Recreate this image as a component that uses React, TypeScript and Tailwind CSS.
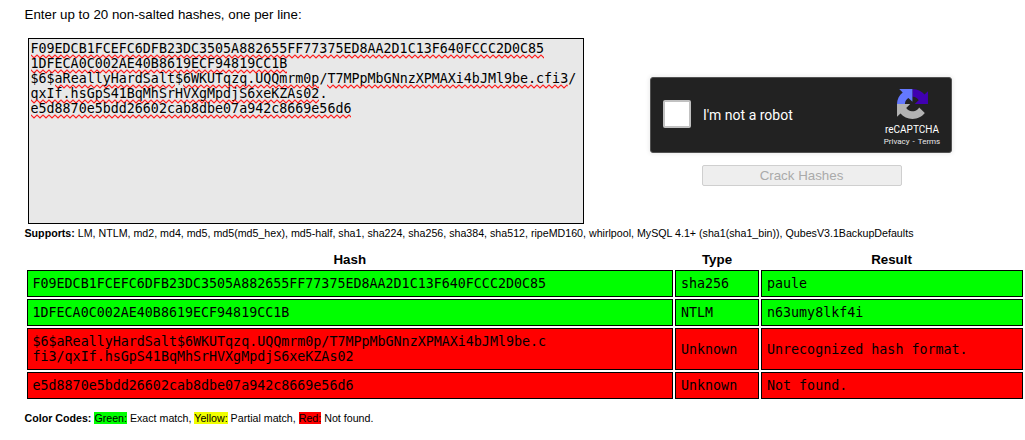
const inputLines: { text: string; bad: boolean }[][] = [
  [{ text: "F09EDCB1FCEFC6DFB23DC3505A882655FF77375ED8AA2D1C13F640FCCC2D0C85", bad: true }],
  [{ text: "1DFECA0C002AE40B8619ECF94819CC1B", bad: true }],
  [
    { text: "$6$", bad: false },
    { text: "aReallyHardSalt", bad: true },
    { text: "$", bad: false },
    { text: "6WKUTqzq.UQQmrm0p", bad: true },
    { text: "/", bad: false },
    { text: "T7MPpMbGNnzXPMAXi4bJMl9be.cfi3", bad: true },
    { text: "/", bad: false },
  ],
  [
    { text: "qxIf.hsGpS41BqMhSrHVXgMpdjS6xeKZAs02", bad: true },
    { text: ".", bad: false },
  ],
  [{ text: "e5d8870e5bdd26602cab8dbe07a942c8669e56d6", bad: true }],
];

const rows = [
  { hash: ["F09EDCB1FCEFC6DFB23DC3505A882655FF77375ED8AA2D1C13F640FCCC2D0C85"], type: "sha256", result: "paule", found: true },
  { hash: ["1DFECA0C002AE40B8619ECF94819CC1B"], type: "NTLM", result: "n63umy8lkf4i", found: true },
  {
    hash: ["$6$aReallyHardSalt$6WKUTqzq.UQQmrm0p/T7MPpMbGNnzXPMAXi4bJMl9be.c", "fi3/qxIf.hsGpS41BqMhSrHVXgMpdjS6xeKZAs02"],
    type: "Unknown",
    result: "Unrecognized hash format.",
    found: false,
  },
  { hash: ["e5d8870e5bdd26602cab8dbe07a942c8669e56d6"], type: "Unknown", result: "Not found.", found: false },
];

function Squiggle({ id }: { id: string }) {
  return (
    <svg className="absolute left-0 top-[13px] h-[5px] w-full" aria-hidden="true">
      <defs>
        <pattern id={id} width="6" height="5" patternUnits="userSpaceOnUse">
          <path d="M-1 2L0 1L3 4L6 1L7 2" fill="none" stroke="#ff1a1a" strokeWidth="1.1" />
        </pattern>
      </defs>
      <rect width="100%" height="5" fill={`url(#${id})`} />
    </svg>
  );
}

function RecaptchaLogo() {
  return (
    <svg className="h-[30px] w-[31px]" viewBox="0 0 64 64" preserveAspectRatio="none" aria-hidden="true">
      <path fill="#4000b0" d="M64 31.955l-.033-1.37V4.687l-7.16 7.16C50.948 4.674 42.033.093 32.05.093L31.86 16.45c.485 0 .86.057 1.135.163 4.976.393 9.288 3.14 11.828 7.124l-8.307 8.307L64 31.953" />
      <path fill="#6478ff" d="M31.862.094l-1.37.033H4.594l7.16 7.16C4.58 13.147 0 22.06 0 32.046H16.26c0-.485.057-.86.163-1.135.393-4.976 3.14-9.288 7.124-11.828l8.307 8.307L31.86.095" />
      <path fill="#b3b3b3" d="M.001 32.045l.033 1.37v25.898l7.16-7.16c5.86 7.173 14.774 11.754 24.76 11.754 10.4 0 19.622-4.96 25.458-12.64l-11.736-11.86a15.55 15.55 0 0 1-4.754 5.334c-2.05 1.6-4.952 2.906-8.968 2.906-.485 0-.86-.057-1.135-.163-4.976-.393-9.288-3.14-11.828-7.124l8.307-8.307L0 32.045" />
    </svg>
  );
}

export default function App() {
  return (
    <div className="h-[440px] w-[1025px] overflow-hidden bg-white font-['Liberation_Sans',sans-serif] text-[13.333px] leading-[15px] text-black">
      <p className="pl-[24.5px] pt-[7px]">Enter up to 20 non-salted hashes, one per line:</p>

      <div className="mt-[16px] flex pl-[28px]">
        <div className="h-[186px] w-[556px] shrink-0 border border-black bg-[#e8e8e8] px-[1.5px] pt-[2px] font-['DejaVu_Sans_Mono',monospace]">
          {inputLines.map((line, i) => (
            <div key={i} className="flex h-[15px] whitespace-pre">
              {line.map((part, j) => (
                <span key={j} className="relative">
                  {part.text}
                  {part.bad && <Squiggle id={`wave-${i}-${j}`} />}
                </span>
              ))}
            </div>
          ))}
        </div>

        <div className="ml-[66px] flex w-[302px] flex-col items-center pt-[39px]">
          <div className="flex h-[76px] w-[302px] items-start rounded-[3px] border border-[#525252] bg-[#222222] shadow-[0_0_4px_1px_rgba(0,0,0,0.08)]">
            <div className="ml-[12px] mt-[22px] size-[28px] rounded-[2px] border-2 border-[#c1c1c1] bg-white" />
            <span className="ml-[12px] mt-[29px] font-[Roboto,sans-serif] text-[14px] leading-[17px] text-white">I'm not a robot</span>
            <div className="ml-auto mr-[10px] mt-[11px] flex w-[58px] flex-col items-center whitespace-nowrap text-white">
              <RecaptchaLogo />
              <span className="mt-[5px] font-[Roboto,sans-serif] text-[10px] leading-[12px]">reCAPTCHA</span>
              <span className="mt-[1px] font-[Roboto,sans-serif] text-[8px] leading-[10px] text-[#e8e8e8]">
                Privacy<span className="px-[1px]"> - </span>Terms
              </span>
            </div>
          </div>
          <button className="ml-[2px] mt-[12px] h-[21px] w-[200px] rounded-[2px] border border-[#cfcfcf] bg-[#eeeeee] pr-[1px] leading-[19px] text-[#aaaaaa]" disabled>
            Crack Hashes
          </button>
        </div>
      </div>

      <p className="mt-[3px] whitespace-nowrap pl-[24.5px] text-[10.667px] leading-[13px]">
        <b>Supports:</b> LM, NTLM, md2, md4, md5, md5(md5_hex), md5-half, sha1, sha224, sha256, sha384, sha512, ripeMD160, whirlpool, MySQL 4.1+ (sha1(sha1_bin)), QubesV3.1BackupDefaults
      </p>

      <div className="ml-[27px] mt-[12px] flex w-[996px] flex-col gap-[2px]">
        <div className="grid h-[16px] grid-cols-[646px_84px_261px] gap-[2px] text-center font-bold">
          <span className="pr-[0.5px]">Hash</span>
          <span>Type</span>
          <span>Result</span>
        </div>
        {rows.map((row) => (
          <div key={row.hash[0]} className="grid grid-cols-[646px_84px_262px] gap-[2px] font-['DejaVu_Sans_Mono',monospace]">
            {[row.hash, [row.type], [row.result]].map((cell, i) => (
              <div key={i} className={`flex flex-col justify-center border border-black py-[5px] ${i === 0 ? "px-[4.5px]" : "px-[5px]"} ${row.found ? "bg-[#00ff00]" : "bg-[#ff0000]"}`}>
                {cell.map((text) => (
                  <span key={text}>{text}</span>
                ))}
              </div>
            ))}
          </div>
        ))}
      </div>

      <p className="mt-[13px] pl-[24.5px] text-[10.667px] leading-[13px]">
        <b>Color Codes:</b> <span className="bg-[#00ff00]">Green:</span> Exact match, <span className="bg-[#f0ff00]">Yellow:</span> Partial match, <span className="bg-[#ff0000]">Red:</span> Not found.
      </p>
    </div>
  );
}
